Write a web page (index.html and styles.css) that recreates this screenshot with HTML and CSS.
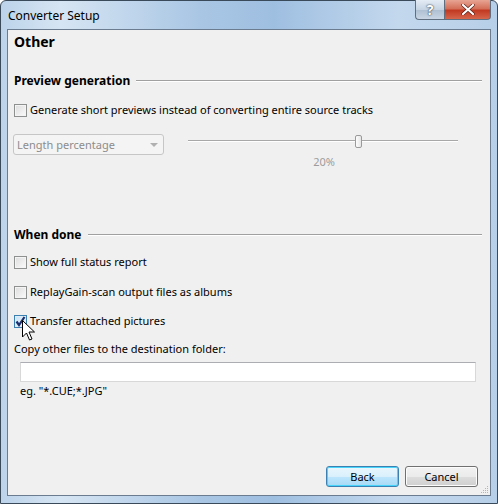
FILE: index.html
```html
<!DOCTYPE html>
<html>
<head>
<meta charset="utf-8">
<link rel="stylesheet" href="styles.css">
</head>
<body>
<div class="window">
  <div class="titlebar">
    <span class="title">Converter Setup</span>
    <div class="caption-btns">
      <div class="cbtn help">?</div>
      <div class="cbtn close">
        <svg width="14" height="11" viewBox="0 0 14 11"><path d="M2 1 L12 10 M12 1 L2 10" stroke="#5a1a10" stroke-width="3.4" stroke-linecap="round"/><path d="M2 1 L12 10 M12 1 L2 10" stroke="#fff" stroke-width="2.2" stroke-linecap="round"/></svg>
      </div>
    </div>
  </div>
  <div class="client">
    <div class="page-title">Other</div>

    <div class="section-head"><span>Preview generation</span><div class="rule"></div></div>
    <label class="check-row first"><span class="cb"></span><span>Generate short previews instead of converting entire source tracks</span></label>

    <div class="preview-row">
      <div class="combo"><span>Length percentage</span><span class="arrow"></span></div>
      <div class="slider-wrap">
        <div class="slider"><div class="track"></div><div class="thumb"></div></div>
        <div class="slider-val">20%</div>
      </div>
    </div>

    <div class="section-head done"><span>When done</span><div class="rule"></div></div>
    <label class="check-row r1"><span class="cb"></span><span>Show full status report</span></label>
    <label class="check-row r2"><span class="cb"></span><span>ReplayGain-scan output files as albums</span></label>
    <label class="check-row r3"><span class="cb checked"><svg width="11" height="11" viewBox="0 0 11 11"><path d="M1.5 5.5 L4 9 L9.5 1" fill="none" stroke="#1b2f6e" stroke-width="2.2"/></svg></span><span>Transfer attached pictures</span></label>

    <div class="copy-label">Copy other files to the destination folder:</div>
    <div class="text-input"></div>
    <div class="hint">eg. "*.CUE;*.JPG"</div>

    <div class="spacer"></div>
    <div class="buttons">
      <div class="btn default">Back</div>
      <div class="btn">Cancel</div>
    </div>
    <svg class="grip" width="9" height="9" viewBox="0 0 9 9"><g fill="#b5b5b5"><rect x="7" y="1" width="1" height="1"/><rect x="5" y="3" width="1" height="1"/><rect x="7" y="3" width="1" height="1"/><rect x="3" y="5" width="1" height="1"/><rect x="5" y="5" width="1" height="1"/><rect x="7" y="5" width="1" height="1"/><rect x="1" y="7" width="1" height="1"/><rect x="3" y="7" width="1" height="1"/><rect x="5" y="7" width="1" height="1"/><rect x="7" y="7" width="1" height="1"/></g></svg>
    <svg class="cursor" width="14" height="22" viewBox="0 0 14 22"><path d="M0.5 0.5 L0.5 17 L4.5 13 L7.5 20 L10 19 L7 12 L12.5 12 Z" fill="#fff" stroke="#000" stroke-width="1"/></svg>
  </div>
</div>
</body>
</html>
```
FILE: styles.css
```css
* { box-sizing: border-box; }
html, body { margin: 0; padding: 0; }
body {
  width: 498px; height: 504px; overflow: hidden;
  font-family: "Noto Sans", "Open Sans", sans-serif;
  font-size: 11px; color: #000;
}
.window {
  width: 498px; height: 504px;
  border: 1px solid #3a4a5a;
  border-radius: 6px 6px 0 0;
  background: linear-gradient(90deg, #bcd3ea 0%, #d6e5f3 12%, #a9c6e4 40%, #9fbfe1 55%, #c3d8ed 80%, #b7cfe8 100%);
  display: flex; flex-direction: column;
  position: relative;
}
.titlebar {
  height: 28px; display: flex; align-items: flex-start; position: relative;
}
.title {
  margin: 7px 0 0 7px; font-size: 12px; color: #000; line-height: 16px;
}
.caption-btns { position: absolute; top: -1px; right: 6px; display: flex; }
.cbtn {
  height: 20px; border: 1px solid #5f6f80; border-top: none;
  display: flex; align-items: center; justify-content: center;
}
.help {
  width: 29px; border-radius: 0 0 0 4px; border-right: none;
  background: linear-gradient(#e4ecf5, #c6d4e3 50%, #aebfd2 51%, #c9d6e4);
  color: #fff; font-weight: bold; font-size: 14px;
  text-shadow: 0 0 2px #33465a, 0 0 1px #33465a;
}
.close {
  width: 47px; border-radius: 0 0 4px 0;
  background: linear-gradient(#e8a493, #d3705a 45%, #c23a22 55%, #d5664c);
}
.client {
  margin: 0 6px 7px 6px; flex: 1;
  border: 1px solid #6b7c90;
  background: #f0f0f0;
  display: flex; flex-direction: column;
  position: relative;
}
.page-title {
  font-weight: bold; font-size: 14px; line-height: 18px;
  margin: 3px 0 0 6px;
}
.section-head {
  display: flex; align-items: center; margin: 22px 8px 0 6px;
  font-weight: bold; font-size: 12px; line-height: 16px;
}
.section-head .rule {
  flex: 1; height: 2px; margin-left: 6px;
  border-top: 1px solid #a0a0a0; border-bottom: 1px solid #fff;
}
.section-head.done { margin-top: 58px; }
.check-row {
  display: flex; align-items: center; margin-left: 6px; line-height: 16px;
}
.check-row.first { margin-top: 13px; }
.check-row.r1 { margin-top: 11px; }
.check-row.r2 { margin-top: 14px; }
.check-row.r3 { margin-top: 13px; }
.cb {
  width: 13px; height: 13px; margin-right: 3px;
  border: 1px solid #8e8f8f;
  background: linear-gradient(135deg, #dcdcdc, #fbfbfb);
  box-shadow: inset 0 0 0 1px #f4f4f4;
  display: flex; align-items: center; justify-content: center;
}
.cb.checked {
  border-color: #3c7fb1;
  background: linear-gradient(135deg, #c9e1f5, #f2f8fd);
  box-shadow: inset 0 0 0 1px #deedf9;
}
.preview-row { display: flex; margin-top: 16px; margin-left: 5px; }
.combo {
  width: 151px; height: 21px; border: 1px solid #c6c6c6; border-radius: 3px;
  background: #f4f4f4; color: #8c8c8c;
  display: flex; align-items: center; justify-content: space-between;
  padding: 0 5px 0 3px;
}
.arrow {
  width: 0; height: 0; border-left: 4px solid transparent; border-right: 4px solid transparent;
  border-top: 4px solid #b0b0b0;
}
.slider-wrap { margin-left: 24px; margin-top: 1px; width: 270px; display: flex; flex-direction: column; align-items: center; }
.slider { position: relative; width: 270px; height: 13px; }
.track {
  position: absolute; left: 0; right: 0; top: 5px; height: 2px;
  border-top: 1px solid #a8a8a8; border-bottom: 1px solid #fff;
}
.thumb {
  position: absolute; left: 167px; top: 0; width: 7px; height: 13px;
  border: 1px solid #9a9a9a; border-radius: 2px;
  background: linear-gradient(90deg, #fdfdfd, #e6e6e6);
}
.slider-val { color: #9c9c9c; margin-top: 7px; line-height: 14px; margin-left: 2px; }
.copy-label { margin: 12px 0 0 6px; line-height: 16px; }
.text-input {
  margin: 5px 0 0 12px; width: 456px; height: 20px;
  background: #fff; border: 1px solid #d8d8d8; border-top-color: #abadb3;
}
.hint { margin: 1px 0 0 12px; line-height: 16px; font-size: 11px; }
.spacer { flex: 1; }
.buttons { display: flex; justify-content: flex-end; gap: 6px; margin: 0 12px 8px 0; }
.btn {
  width: 73px; height: 21px; border: 1px solid #707070; border-radius: 3px;
  background: linear-gradient(#f2f2f2 0%, #ebebeb 50%, #dddddd 51%, #cfcfcf 100%);
  box-shadow: inset 0 0 0 1px #fcfcfc;
  display: flex; align-items: center; justify-content: center; line-height: 14px;
}
.btn.default {
  border-color: #3c7fb1;
  background: linear-gradient(#eaf6fd 0%, #d9f0fc 50%, #bee6fd 51%, #a7d9f5 100%);
  box-shadow: inset 0 0 0 1px #48d5fb;
}
.grip { position: absolute; right: 1px; bottom: 1px; }
.cursor { position: absolute; left: 14px; top: 290px; }
```
